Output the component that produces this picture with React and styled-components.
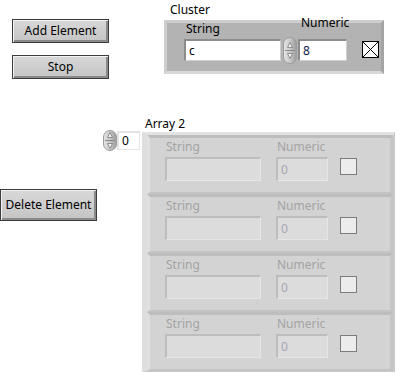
import React from "react";
import styled, { createGlobalStyle } from "styled-components";

const Global = createGlobalStyle`
  html, body { margin: 0; padding: 0; background: #fff; }
  body {
    font-family: "Noto Sans", "DejaVu Sans", sans-serif;
    font-size: 12px;
    color: #000;
  }
  * { box-sizing: border-box; }
`;

const Page = styled.div`
  width: 414px;
  height: 378px;
  display: flex;
  flex-direction: column;
  overflow: hidden;
`;

const TopRow = styled.div`
  display: flex;
  height: 116px;
`;

const ButtonCol = styled.div`
  display: flex;
  flex-direction: column;
  gap: 12px;
  padding: 19px 0 0 12px;
`;

const LVButton = styled.div`
  width: 97px;
  height: ${(p) => p.$h || 24}px;
  border: 1px solid #3c3c3c;
  background: linear-gradient(#d8d8d8, #c4c4c4);
  box-shadow: inset 1px 1px 0 #f2f2f2, inset -2px -2px 0 #8a8a8a;
  display: flex;
  align-items: center;
  justify-content: center;
  font-size: 12px;
  line-height: 1;
  padding-bottom: 1px;
`;

const ClusterWrap = styled.div`
  display: flex;
  flex-direction: column;
  margin-left: 55px;
  padding-top: 2px;
`;

const Label = styled.div`
  font-size: 12px;
  line-height: 15px;
  color: ${(p) => (p.$disabled ? "#a3a3a3" : "#000")};
  margin-left: ${(p) => p.$ml || 0}px;
  margin-bottom: ${(p) => p.$mb || 0}px;
  white-space: nowrap;
`;

const ClusterBox = styled.div`
  width: 220px;
  height: 54px;
  margin-top: 3px;
  background: #b3b3b3;
  border-style: solid;
  border-width: 3px;
  border-color: #cdcdcd #a4a4a4 #d8d8d8 #cdcdcd;
  display: flex;
  align-items: flex-end;
  padding: 0 0 10px 17px;
`;

const FieldGroup = styled.div`
  display: flex;
  flex-direction: column;
`;

const Field = styled.div`
  width: ${(p) => p.$w}px;
  height: ${(p) => p.$h || 22}px;
  background: ${(p) => (p.$disabled ? "#dcdcdc" : "#fff")};
  border-style: solid;
  border-width: 2px 1px 1px 2px;
  border-color: ${(p) =>
    p.$disabled
      ? "#bdbdbd #e6e6e6 #e6e6e6 #bdbdbd"
      : p.$flat
      ? "#e4e4e4 #e4e4e4 #e4e4e4 #e4e4e4"
      : "#8c8c8c #d0d0d0 #d0d0d0 #8c8c8c"};
  padding: 0 3px;
  font-size: 12px;
  line-height: ${(p) => (p.$h || 22) - 3}px;
  color: ${(p) => (p.$disabled ? "#a6a6b4" : p.$blue ? "#102050" : "#000")};
`;

const SpinBox = styled.div`
  display: flex;
  align-items: center;
  margin: 0 1px 0 2px;
  margin-bottom: ${(p) => p.$mb || 0}px;
`;

const Check = styled.div`
  width: 17px;
  height: 17px;
  margin-left: ${(p) => p.$ml || 0}px;
  margin-top: ${(p) => p.$mt || 0}px;
  margin-bottom: ${(p) => p.$mb || 0}px;
  background: ${(p) => (p.$disabled ? "#ececec" : "#fff")};
  border: 1px solid ${(p) => (p.$disabled ? "#7c7c7c" : "#000")};
  display: flex;
`;

const BottomRow = styled.div`
  display: flex;
`;

const LeftCol = styled.div`
  width: 142px;
  display: flex;
  flex-direction: column;
`;

const IndexCtl = styled.div`
  display: flex;
  align-items: center;
  align-self: flex-end;
  margin: 14px 2px 0 0;
`;

const DeleteWrap = styled.div`
  margin-top: 38px;
`;

const ArrayCol = styled.div`
  display: flex;
  flex-direction: column;
`;

const ArrayFrame = styled.div`
  width: 253px;
  margin-top: 1px;
  background: #cfcfcf;
  border-style: solid;
  border-width: 3px 2px 1px 5px;
  border-color: #e3e3e3 #c8c8c8 #c8c8c8 #dedede;
  display: flex;
  flex-direction: column;
`;

const Element = styled.div`
  height: 59px;
  background: #d3d3d3;
  border-style: solid;
  border-width: 3px 3px 2px 3px;
  border-color: #bdbdbd #c6c6c6 #c4c4c4 #e0e0e0;
  display: flex;
  align-items: flex-start;
  padding: 1px 0 0 15px;
`;

const ElemGroup = styled.div`
  display: flex;
  flex-direction: column;
  margin-right: ${(p) => p.$mr || 0}px;
`;

function Spinner({ h = 27 }) {
  return (
    <svg width="14" height={h} viewBox={`0 0 14 ${h}`}>
      <defs>
        <linearGradient id={`sg${h}`} x1="0" x2="1" y1="0" y2="0">
          <stop offset="0" stopColor="#e6e6e6" />
          <stop offset="0.5" stopColor="#c9c9c9" />
          <stop offset="1" stopColor="#9a9a9a" />
        </linearGradient>
      </defs>
      <rect x="0.5" y="0.5" width="13" height={h - 1} rx="6.5" fill={`url(#sg${h})`} stroke="#9c9c9c" />
      <line x1="2" x2="12" y1={h / 2} y2={h / 2} stroke="#8a8a8a" />
      <path d={`M4.5 ${h / 2 - 3} L7 ${h / 2 - 8} L9.5 ${h / 2 - 3} Z`} fill="#f4f4f4" stroke="#7a7a7a" strokeWidth="0.8" />
      <path d={`M4.5 ${h / 2 + 3} L7 ${h / 2 + 8} L9.5 ${h / 2 + 3} Z`} fill="#f4f4f4" stroke="#7a7a7a" strokeWidth="0.8" />
    </svg>
  );
}

function XMark() {
  return (
    <svg width="15" height="15" viewBox="0 0 15 15">
      <line x1="0" y1="0" x2="15" y2="15" stroke="#000" />
      <line x1="15" y1="0" x2="0" y2="15" stroke="#000" />
    </svg>
  );
}

function ArrayElement() {
  return (
    <Element>
      <ElemGroup $mr={15}>
        <Label $disabled $ml={1} $mb={3}>String</Label>
        <Field $w={96} $h={24} $disabled />
      </ElemGroup>
      <ElemGroup $mr={12}>
        <Label $disabled $ml={1} $mb={3}>Numeric</Label>
        <Field $w={52} $h={24} $disabled>0</Field>
      </ElemGroup>
      <Check $disabled $mt={19} />
    </Element>
  );
}

export default function App() {
  return (
    <Page>
      <Global />
      <TopRow>
        <ButtonCol>
          <LVButton>Add Element</LVButton>
          <LVButton>Stop</LVButton>
        </ButtonCol>
        <ClusterWrap>
          <Label $ml={6}>Cluster</Label>
          <ClusterBox>
            <FieldGroup>
              <Label $ml={2} $mb={3}>String</Label>
              <Field $w={97}>c</Field>
            </FieldGroup>
            <SpinBox $mb={-3}>
              <Spinner h={27} />
            </SpinBox>
            <FieldGroup>
              <Label $ml={3} $mb={9}>Numeric</Label>
              <Field $w={49} $blue>8</Field>
            </FieldGroup>
            <Check $ml={13} $mb={3}>
              <XMark />
            </Check>
          </ClusterBox>
        </ClusterWrap>
      </TopRow>
      <BottomRow>
        <LeftCol>
          <IndexCtl>
            <Spinner h={21} />
            <Field $w={23} $h={19} $flat>0</Field>
          </IndexCtl>
          <DeleteWrap>
            <LVButton $h={32}>Delete Element</LVButton>
          </DeleteWrap>
        </LeftCol>
        <ArrayCol>
          <Label $ml={3}>Array 2</Label>
          <ArrayFrame>
            <ArrayElement />
            <ArrayElement />
            <ArrayElement />
            <ArrayElement />
          </ArrayFrame>
        </ArrayCol>
      </BottomRow>
    </Page>
  );
}
